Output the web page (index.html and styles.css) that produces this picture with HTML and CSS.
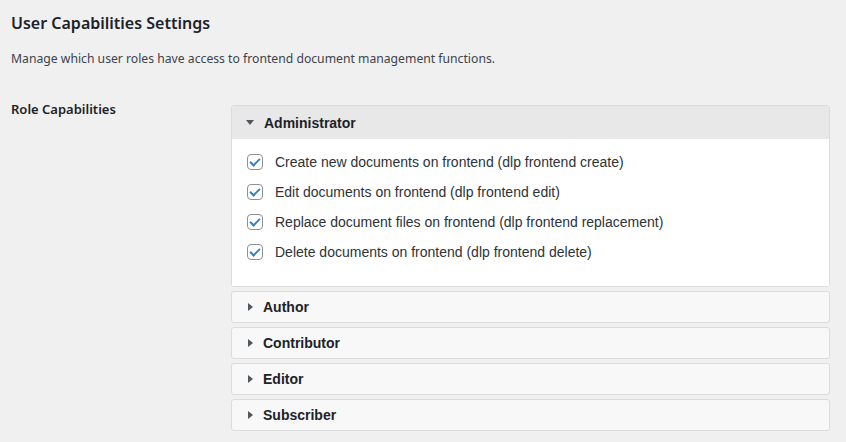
FILE: index.html
```html
<!DOCTYPE html>
<html lang="en">
<head>
  <meta charset="UTF-8" />
  <title>User Capabilities Settings</title>
  <link rel="stylesheet" href="styles.css">
</head>
<body>
  <div class="wrap">
    <h2 class="title">User Capabilities Settings</h2>
    <p class="desc">Manage which user roles have access to frontend document management functions.</p>

    <div class="form-row">
      <div class="form-label">Role Capabilities</div>
      <div class="roles">
        <details class="role" open>
          <summary><span class="arrow"></span>Administrator</summary>
          <div class="caps">
            <label class="cap"><span class="box checked"></span>Create new documents on frontend (dlp frontend create)</label>
            <label class="cap"><span class="box checked"></span>Edit documents on frontend (dlp frontend edit)</label>
            <label class="cap"><span class="box checked"></span>Replace document files on frontend (dlp frontend replacement)</label>
            <label class="cap"><span class="box checked"></span>Delete documents on frontend (dlp frontend delete)</label>
          </div>
        </details>
        <details class="role">
          <summary><span class="arrow"></span>Author</summary>
        </details>
        <details class="role">
          <summary><span class="arrow"></span>Contributor</summary>
        </details>
        <details class="role">
          <summary><span class="arrow"></span>Editor</summary>
        </details>
        <details class="role">
          <summary><span class="arrow"></span>Subscriber</summary>
        </details>
      </div>
    </div>
  </div>
</body>
</html>
```

FILE: styles.css
```css
body {
  margin: 0;
  background: #f0f0f1;
  color: #1d2327;
  font-family: "Noto Sans", "Open Sans", sans-serif;
  font-size: 13px;
}

.wrap {
  padding: 12px 16px 0 11px;
}

.title {
  font-size: 16px;
  font-weight: 600;
  margin: 0;
  line-height: 22px;
}

.desc {
  margin: 16px 0 0;
  color: #3c434a;
  font-size: 12.2px;
  line-height: 18px;
}

.form-row {
  display: flex;
  margin-top: 32px;
}

.form-label {
  width: 220px;
  flex-shrink: 0;
  font-weight: 600;
  line-height: 18px;
}

.roles {
  width: 600px;
  margin-top: 5px;
  display: flex;
  flex-direction: column;
  gap: 4px;
  font-family: "Liberation Sans", Arial, sans-serif;
  font-size: 14px;
}

.role {
  border: 1px solid #dcdcde;
  border-radius: 3px;
  background: #f8f8f8;
}

.role summary {
  list-style: none;
  display: flex;
  align-items: center;
  height: 30px;
  padding-left: 14px;
  font-weight: bold;
  color: #1d2327;
  cursor: pointer;
}

.role summary::-webkit-details-marker {
  display: none;
}

.arrow {
  width: 0;
  height: 0;
  border-top: 4px solid transparent;
  border-bottom: 4px solid transparent;
  border-left: 5px solid #50575e;
  margin-right: 10px;
  margin-left: 2px;
}

.role[open] summary {
  background: #e8e8e8;
  height: 33px;
}

.role[open] .arrow {
  border-left: 4px solid transparent;
  border-right: 4px solid transparent;
  border-top: 5px solid #50575e;
  border-bottom: 0;
  margin-left: 0;
  margin-right: 10px;
}

.caps {
  background: #fff;
  padding: 14px 15px 25px;
  display: flex;
  flex-direction: column;
  gap: 12px;
}

.cap {
  display: flex;
  align-items: center;
  height: 18px;
  color: #2c3338;
}

.box {
  width: 14px;
  height: 14px;
  border: 1px solid #8c8f94;
  border-radius: 4px;
  background: #fff;
  margin-right: 12px;
  position: relative;
  flex-shrink: 0;
}

.box.checked::after {
  content: "";
  position: absolute;
  left: 4px;
  top: 1px;
  width: 4px;
  height: 8px;
  border: solid #3582c4;
  border-width: 0 2px 2px 0;
  transform: rotate(45deg);
}
```
